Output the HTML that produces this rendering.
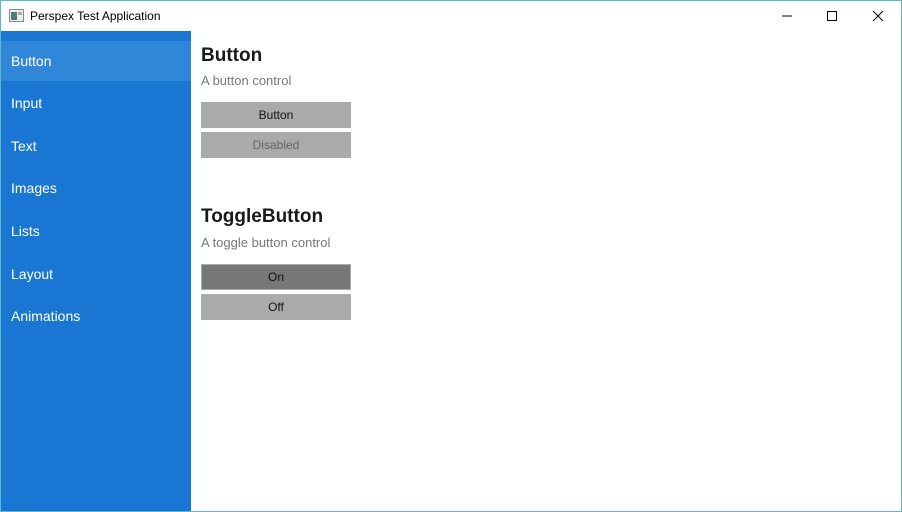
<!DOCTYPE html>
<html><head><style>
*{margin:0;padding:0;box-sizing:border-box}
body{width:902px;height:512px;overflow:hidden;background:#fff;font-family:"Segoe UI","Liberation Sans",sans-serif;position:relative}
.win{position:absolute;left:0;top:0;width:902px;height:512px;border:1px solid #5fb8c8}
.title{position:absolute;left:30px;top:9px;font-size:12px;color:#000}
.side{position:absolute;left:1px;top:31px;width:190px;height:480px;background:#1976d2}
.item{position:absolute;left:0;width:190px;height:40px;color:#fff;font-size:14px;padding-left:10px;line-height:41px}
.sel{background:#3086d8}
.h{position:absolute;left:201px;font-size:19px;color:#1a1a1a;font-weight:600}
.s{position:absolute;left:201px;font-size:13px;color:#777}
.b{position:absolute;left:201px;width:150px;height:26px;background:#aaa;font-size:12px;text-align:center;line-height:27px;color:#111}
</style></head><body>
<div class="win"></div>
<svg style="position:absolute;left:9px;top:9px" width="15" height="13"><rect x="0.5" y="0.5" width="14" height="12" fill="#eee" stroke="#888"/><rect x="2" y="3" width="6" height="8" fill="#4a7a70"/><rect x="9" y="3" width="4" height="3" fill="#aaa"/></svg>
<div class="title">Perspex Test Application</div>
<svg style="position:absolute;left:780px;top:8px" width="110" height="16"><line x1="2" y1="8" x2="12" y2="8" stroke="#000"/><rect x="47.5" y="3.5" width="9" height="9" fill="none" stroke="#000"/><path d="M93 3L103 13M103 3L93 13" stroke="#000"/></svg>
<div class="side">
<div class="item sel" style="top:10px">Button</div>
<div class="item" style="top:52px">Input</div>
<div class="item" style="top:95px">Text</div>
<div class="item" style="top:137px">Images</div>
<div class="item" style="top:180px">Lists</div>
<div class="item" style="top:223px">Layout</div>
<div class="item" style="top:265px">Animations</div>
</div>
<div class="h" style="top:45px">Button</div>
<div class="s" style="top:73px">A button control</div>
<div class="b" style="top:102px">Button</div>
<div class="b" style="top:132px;color:#666">Disabled</div>
<div class="h" style="top:206px">ToggleButton</div>
<div class="s" style="top:235px">A toggle button control</div>
<div class="b" style="top:264px;background:#777;border:1px solid #aaa;line-height:25px">On</div>
<div class="b" style="top:294px">Off</div>
</body></html>
